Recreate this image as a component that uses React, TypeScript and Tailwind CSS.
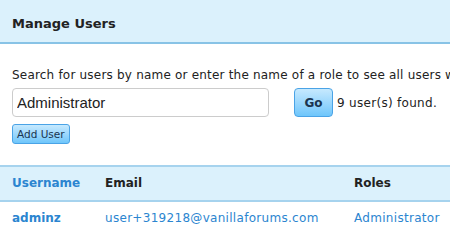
import React from 'react';

const users = [
    { name: 'adminz', email: 'user+319218@vanillaforums.com', role: 'Administrator' },
];

const App: React.FC = () => {
    return (
        <div className="w-[450px] h-[235px] overflow-hidden bg-white text-[#222] font-['DejaVu_Sans',sans-serif]">
            {/* Header */}
            <div className="h-[44px] bg-[#dbf1fc] border-b-2 border-[#88c3e6] flex items-center px-3 pt-[5px]">
                <h1 className="text-[13px] font-bold text-[#222]">Manage Users</h1>
            </div>

            {/* Search */}
            <div className="px-3 pt-[22px]">
                <p className="text-[12px] tracking-[0.2px] whitespace-nowrap leading-[18px]">
                    Search for users by name or enter the name of a role to see all users with that role.
                </p>
                <div className="flex items-center mt-[4px]">
                    <input
                        readOnly
                        value="Administrator"
                        className="w-[257px] h-[29px] border border-[#ccc] rounded-[4px] px-[4px] text-[15px] text-[#222] font-['Liberation_Sans',sans-serif] outline-none"
                    />
                    <button className="ml-[25px] w-[39px] h-[29px] rounded-[4px] border border-[#4aa3e6] bg-gradient-to-b from-[#c6e9fe] to-[#6ec6fb] text-[12px] font-bold text-[#1a3550]">
                        Go
                    </button>
                    <span className="ml-[4px] text-[12px] tracking-[0.3px]">9 user(s) found.</span>
                </div>
                <button className="mt-[7px] h-[20px] px-[4px] rounded-[3px] border border-[#4aa3e6] bg-gradient-to-b from-[#c6e9fe] to-[#6ec6fb] text-[10.5px] text-[#1a3550] leading-none">
                    Add User
                </button>
            </div>

            {/* Users table */}
            <table className="mt-[20px] w-full text-[12px] tracking-[0.3px] border-collapse">
                <thead>
                    <tr className="bg-[#dbf1fc] border-y-2 border-[#a6d3ee] h-[35px]">
                        <th className="text-left pl-3 w-[105px] font-bold tracking-normal text-[#2b85d0]">Username</th>
                        <th className="text-left w-[249px] font-bold tracking-normal text-[#222]">Email</th>
                        <th className="text-left font-bold tracking-normal text-[#222]">Roles</th>
                    </tr>
                </thead>
                <tbody>
                    {users.map(u => (
                        <tr key={u.name} className="h-[34px]">
                            <td className="pl-3 font-bold tracking-normal text-[#2b85d0]">{u.name}</td>
                            <td className="text-[#2b85d0]">{u.email}</td>
                            <td className="text-[#2b85d0]">{u.role}</td>
                        </tr>
                    ))}
                </tbody>
            </table>
        </div>
    );
};

export default App;
